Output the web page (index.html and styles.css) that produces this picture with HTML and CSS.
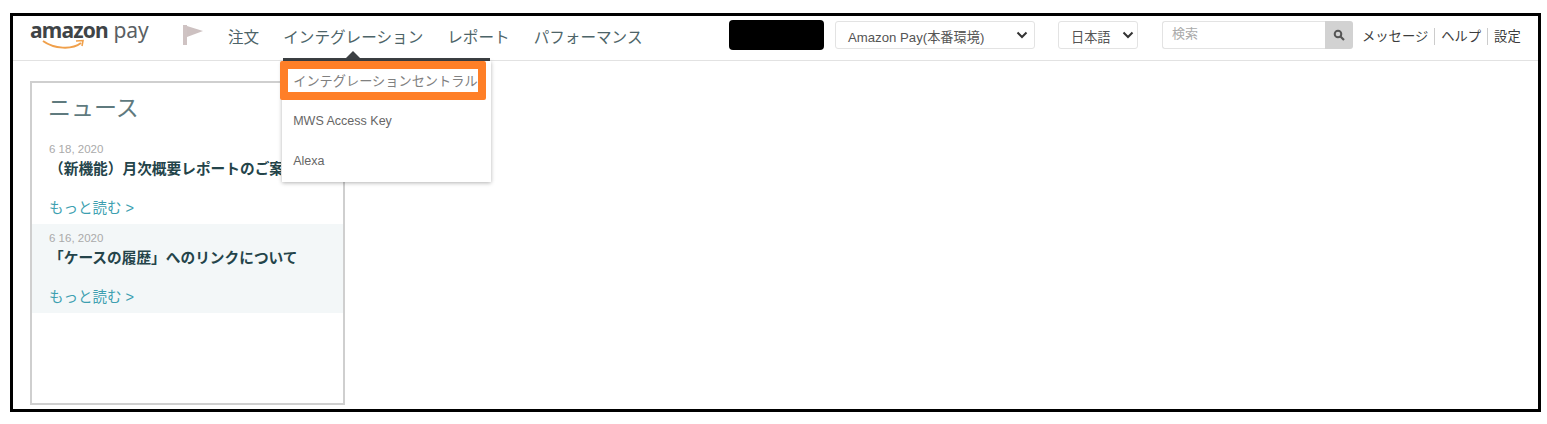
FILE: index.html
```html
<!DOCTYPE html>
<html lang="ja">
<head>
    <meta charset="UTF-8">
    <meta name="viewport" content="width=device-width, initial-scale=1.0">
    <title>Amazon Pay</title>
    <link rel="stylesheet" href="styles.css">
</head>
<body>
    <div class="frame">
        <div class="header">
            <div class="logo">
                <div class="logo-text"><b>amazon</b> pay</div>
                <svg class="logo-smile" width="52" height="12" viewBox="0 0 52 12">
                    <path d="M1 2 C12 10 30 11 39 4" fill="none" stroke="#f0a04b" stroke-width="2"/>
                    <path d="M34 2 L41 1.500 L40 7" fill="none" stroke="#f0a04b" stroke-width="1.600"/>
                </svg>
            </div>
            <svg class="flag" width="22" height="22" viewBox="0 0 22 22">
                <path d="M1 1 H5 V21 H1 Z" fill="#cfc3c3"/>
                <path d="M5 2 L21 7 L5 13 Z" fill="#cdc1c1"/>
            </svg>
            <div class="nav">
                <a class="nav-item">注文</a>
                <div class="nav-item active">
                    インテグレーション
                    <div class="menu">
                        <a class="menu-item first">インテグレーションセントラル</a>
                        <a class="menu-item">MWS Access Key</a>
                        <a class="menu-item">Alexa</a>
                    </div>
                    <div class="callout"></div>
                </div>
                <a class="nav-item">レポート</a>
                <a class="nav-item">パフォーマンス</a>
            </div>
            <div class="redacted"></div>
            <div class="select store-select">
                <span>Amazon Pay(本番環境)</span>
                <svg width="12" height="8" viewBox="0 0 12 8"><path d="M1.500 1.500 L6 6 L10.500 1.500" fill="none" stroke="#333" stroke-width="2"/></svg>
            </div>
            <div class="select lang-select">
                <span>日本語</span>
                <svg width="12" height="8" viewBox="0 0 12 8"><path d="M1.500 1.500 L6 6 L10.500 1.500" fill="none" stroke="#333" stroke-width="2"/></svg>
            </div>
            <div class="search">
                <div class="search-input">検索</div>
                <div class="search-btn">
                    <svg width="12" height="12" viewBox="0 0 12 12">
                        <circle cx="5" cy="5" r="3.300" fill="none" stroke="#555" stroke-width="2"/>
                        <path d="M7.500 7.500 L11 11" stroke="#555" stroke-width="2.200"/>
                    </svg>
                </div>
            </div>
            <div class="links">
                <a>メッセージ</a>
                <a>ヘルプ</a>
                <a>設定</a>
            </div>
        </div>
        <div class="content">
            <div class="news">
                <h2>ニュース</h2>
                <div class="news-item">
                    <div class="news-date">6 18, 2020</div>
                    <div class="news-title clipped">（新機能）月次概要レポートのご案内</div>
                    <a class="news-more">もっと読む &gt;</a>
                </div>
                <div class="news-item shaded">
                    <div class="news-date">6 16, 2020</div>
                    <div class="news-title">「ケースの履歴」へのリンクについて</div>
                    <a class="news-more">もっと読む &gt;</a>
                </div>
            </div>
        </div>
    </div>
</body>
</html>
```

FILE: styles.css
```css
* {
    box-sizing: border-box;
}
body {
    font-family: "Liberation Sans", "Noto Sans CJK JP", sans-serif;
    background-color: #fff;
    margin: 0;
    padding: 13px 6px 0 10px;
}
.frame {
    width: 1531px;
    height: 399px;
    border: 3px solid #000;
    background-color: #fff;
}
.header {
    display: flex;
    align-items: center;
    height: 45px;
    border-bottom: 1px solid #e2e2e2;
    padding: 0 0 6px 17px;
}
.logo {
    width: 116px;
    height: 36px;
    display: flex;
    flex-direction: column;
}
.logo-text {
    font-family: "Noto Sans", sans-serif;
    font-size: 21px;
    line-height: 27px;
    color: #5a5f63;
    white-space: nowrap;
}
.logo-text b {
    color: #3f4447;
    letter-spacing: -0.8px;
}
.logo-smile {
    margin: -5px 0 0 12px;
}
.flag {
    margin-left: 36px;
}
.nav {
    display: flex;
    align-self: stretch;
    gap: 24px;
    margin: 0 0 -6px 24px;
    width: 501px;
}
.nav-item {
    position: relative;
    font-size: 15.600px;
    line-height: 43px;
    color: #4d6468;
    white-space: nowrap;
}
.active::before {
    content: "";
    position: absolute;
    left: 0;
    top: 42px;
    width: 207px;
    height: 3px;
    background-color: #3c4043;
}
.active::after {
    content: "";
    position: absolute;
    left: 63px;
    top: 35px;
    border: 7px solid transparent;
    border-top: 0;
    border-bottom-color: #3c4043;
}
.menu {
    position: absolute;
    left: -1px;
    top: 45px;
    width: 209px;
    height: 121px;
    background-color: #fff;
    box-shadow: 0 1px 4px rgba(0, 0, 0, 0.3);
    z-index: 2;
}
.menu-item {
    display: block;
    height: 40px;
    padding-left: 11px;
    font-size: 12.500px;
    line-height: 40px;
    color: #666;
}
.menu-item.first {
    font-size: 13.200px;
    line-height: 42px;
    color: #808080;
}
.callout {
    position: absolute;
    left: -3px;
    top: 45px;
    width: 206px;
    height: 39px;
    border: 8px solid #ff7f27;
    border-radius: 2px;
    z-index: 3;
}
.redacted {
    width: 95px;
    height: 30px;
    background-color: #000;
    border-radius: 4px;
}
.select {
    display: flex;
    align-items: center;
    justify-content: space-between;
    height: 28px;
    margin-left: 11px;
    border: 1px solid #e3e3e3;
    border-radius: 3px;
    font-size: 13.200px;
    color: #555;
}
.select span {
    padding-top: 2px;
}
.store-select {
    width: 200px;
    padding: 0 6px 0 12px;
}
.lang-select {
    width: 80px;
    margin-left: 23px;
    padding: 0 3px 0 12px;
}
.search {
    display: flex;
    width: 191px;
    height: 28px;
    margin-left: 24px;
}
.search-input {
    flex: 1;
    padding-left: 9px;
    border: 1px solid #e3e3e3;
    border-right: 0;
    border-radius: 3px 0 0 3px;
    font-size: 13px;
    line-height: 24px;
    color: #aaa;
}
.search-btn {
    display: flex;
    align-items: center;
    justify-content: center;
    width: 28px;
    background-color: #d2d2d2;
    border-radius: 0 3px 3px 0;
}
.links {
    display: flex;
    margin: 2px 0 0 9px;
    font-size: 13.300px;
    color: #3c3c3c;
    white-space: nowrap;
}
.links a {
    line-height: 17px;
    padding: 0 6px;
    border-left: 1px solid #ccc;
}
.links a:first-child {
    border-left: 0;
    padding-left: 0;
}
.content {
    padding: 20px 0 0 17px;
}
.news {
    width: 315px;
    height: 324px;
    border: 2px solid #cfcfcf;
    overflow: hidden;
}
.news h2 {
    margin: 0;
    padding: 8px 0 0 16px;
    height: 52px;
    font-size: 23px;
    font-weight: normal;
    line-height: 34px;
    color: #5f7a7e;
}
.news-item {
    height: 89px;
    padding: 8px 0 0 17px;
}
.news-item.shaded {
    background-color: #f3f7f8;
}
.news-date {
    font-size: 11.500px;
    line-height: 13px;
    color: #aaa;
}
.news-title {
    margin-top: 3px;
    font-size: 14.700px;
    font-weight: bold;
    line-height: 21px;
    color: #24444a;
    white-space: nowrap;
}
.news-title.clipped {
    width: 232px;
    overflow: hidden;
}
.news-more {
    display: block;
    margin-top: 18px;
    font-size: 14.500px;
    line-height: 20px;
    color: #3d9fb0;
}
```
